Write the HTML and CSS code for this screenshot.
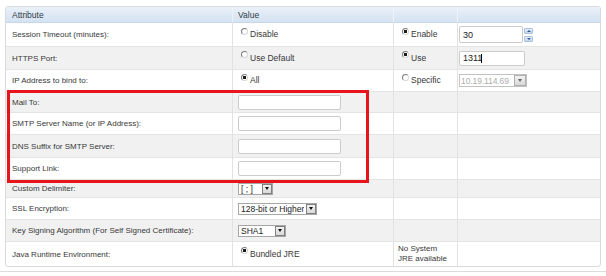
FILE: index.html
```html
<!DOCTYPE html>
<html lang="en">
  <head>
    <meta charset="UTF-8" />
    <title>Server Settings</title>
    <link rel="stylesheet" href="styles.css">
  </head>
  <body>
    <div class="page">
      <table class="settings">
        <colgroup>
          <col class="c-attr" />
          <col class="c-val" />
          <col class="c-opt" />
          <col class="c-extra" />
        </colgroup>
        <thead>
          <tr class="row-head">
            <th>Attribute</th>
            <th>Value</th>
            <th></th>
            <th></th>
          </tr>
        </thead>
        <tbody>
          <tr class="h24">
            <td>Session Timeout (minutes):</td>
            <td><label class="radio"><input type="radio" name="timeout" />Disable</label></td>
            <td><label class="radio"><input type="radio" name="timeout" checked />Enable</label></td>
            <td class="extra">
              <span class="spin">
                <input class="field w-spin" type="text" value="30" />
                <span class="spin-btns"><span class="up"></span><span class="down"></span></span>
              </span>
            </td>
          </tr>
          <tr class="alt h23">
            <td>HTTPS Port:</td>
            <td><label class="radio"><input type="radio" name="port" />Use Default</label></td>
            <td><label class="radio"><input type="radio" name="port" checked />Use</label></td>
            <td class="extra">
              <span class="caret-box">
                <input class="field w-port" type="text" value="1311" />
                <span class="caret"></span>
              </span>
            </td>
          </tr>
          <tr class="h22">
            <td>IP Address to bind to:</td>
            <td><label class="radio"><input type="radio" name="ip" checked />All</label></td>
            <td><label class="radio"><input type="radio" name="ip" />Specific</label></td>
            <td class="extra">
              <span class="select w-ip disabled">
                <select disabled><option>10.19.114.69</option></select>
                <span class="arrow"></span>
              </span>
            </td>
          </tr>
          <tr class="alt h21">
            <td>Mail To:</td>
            <td><input class="field w-text" type="text" /></td>
            <td></td>
            <td></td>
          </tr>
          <tr class="h22">
            <td>SMTP Server Name (or IP Address):</td>
            <td><input class="field w-text" type="text" /></td>
            <td></td>
            <td></td>
          </tr>
          <tr class="alt h23">
            <td>DNS Suffix for SMTP Server:</td>
            <td><input class="field w-text" type="text" /></td>
            <td></td>
            <td></td>
          </tr>
          <tr class="h22">
            <td>Support Link:</td>
            <td><input class="field w-text" type="text" /></td>
            <td></td>
            <td></td>
          </tr>
          <tr class="alt h18">
            <td>Custom Delimiter:</td>
            <td>
              <span class="select w-delim">
                <select><option>[ ; ]</option></select>
                <span class="arrow"></span>
              </span>
            </td>
            <td></td>
            <td></td>
          </tr>
          <tr class="h22">
            <td>SSL Encryption:</td>
            <td>
              <span class="select w-ssl">
                <select><option>128-bit or Higher</option></select>
                <span class="arrow"></span>
              </span>
            </td>
            <td></td>
            <td></td>
          </tr>
          <tr class="alt h22">
            <td>Key Signing Algorithm (For Self Signed Certificate):</td>
            <td>
              <span class="select w-sha">
                <select><option>SHA1</option></select>
                <span class="arrow"></span>
              </span>
            </td>
            <td></td>
            <td></td>
          </tr>
          <tr class="h24">
            <td>Java Runtime Environment:</td>
            <td><label class="radio"><input type="radio" name="jre" checked />Bundled JRE</label></td>
            <td class="note">No System<br />JRE available</td>
            <td></td>
          </tr>
        </tbody>
      </table>
      <div class="page-foot"></div>

      <div class="highlight"></div>
    </div>
  </body>
</html>
```

FILE: styles.css
```css
* {
  box-sizing: border-box;
  margin: 0;
  padding: 0;
}

body {
  background: #fff;
  font-family: "Liberation Sans", Arial, sans-serif;
  font-size: 8px;
  color: #383838;
}

.page {
  position: relative;
  width: 606px;
  padding: 6px 0 0 5px;
}

/* table */

.settings {
  width: 596px;
  table-layout: fixed;
  border-collapse: separate;
  border-spacing: 0;
  border: 1px solid #dadada;
  border-radius: 3px;
}

.c-attr {
  width: 226px;
}

.c-val {
  width: 161px;
}

.c-opt {
  width: 64px;
}

.c-extra {
  width: 143px;
}

.settings th,
.settings td {
  text-align: left;
  vertical-align: middle;
  white-space: nowrap;
  padding: 0 0 0 5px;
  border-bottom: 1px solid #e4e4e4;
  border-left: 1px solid #e2e2e2;
}

.settings th:first-child,
.settings td:first-child {
  border-left: none;
  padding-left: 6px;
}

.settings tr:last-child td {
  border-bottom: none;
}

.settings th {
  font-weight: normal;
  font-size: 8.5px;
  color: #2f3a45;
  background: linear-gradient(to bottom, #eaf1f9, #d4e2f2);
  border-bottom: 1px solid #c9d6e6;
  border-left-color: #eef3fa;
}

.settings td.extra {
  padding-left: 1px;
}

.settings td.note {
  padding-left: 4px;
  line-height: 10px;
  white-space: normal;
}

.alt td {
  background: #f1f1f1;
}

.row-head {
  height: 16px;
}

.h24 {
  height: 24px;
}

.h23 {
  height: 23px;
}

.h22 {
  height: 22px;
}

.h21 {
  height: 21px;
}

.h18 {
  height: 18px;
}

/* radios */

.radio {
  display: inline-flex;
  align-items: center;
  margin-left: 3px;
  font-size: 8.5px;
  color: #383838;
}

.radio input {
  appearance: none;
  width: 7px;
  height: 7px;
  margin: 0 2px 0 0;
  border-radius: 50%;
  border: 1px solid;
  border-color: #7a7a7a #d6d6d6 #d6d6d6 #7a7a7a;
  background: #fff;
  position: relative;
  top: -3px;
}

.radio input:checked {
  background: radial-gradient(circle, #1a1a1a 0 1.4px, #fff 2px);
}

/* text fields */

.field {
  height: 15px;
  border: 1px solid #cbcbcb;
  border-radius: 2px;
  background: #fff;
  padding: 0 3px;
  font-family: "Liberation Sans", Arial, sans-serif;
  font-size: 9px;
  color: #222;
  vertical-align: middle;
  outline: none;
}

.w-text {
  width: 103px;
}

.w-spin {
  width: 64px;
  height: 17px;
}

.w-port {
  width: 66px;
}

.spin {
  display: inline-flex;
  align-items: center;
  gap: 1px;
  vertical-align: middle;
}

.spin-btns {
  display: flex;
  flex-direction: column;
  gap: 2px;
}

.spin-btns span {
  width: 9px;
  height: 6px;
  border: 1px solid #a9c1de;
  border-radius: 1px;
  background: linear-gradient(to bottom, #e8f0fa, #c2d5ec);
  display: flex;
  align-items: center;
  justify-content: center;
}

.spin-btns .up::after {
  content: "";
  border-left: 2px solid transparent;
  border-right: 2px solid transparent;
  border-bottom: 2px solid #2d5b98;
}

.spin-btns .down::after {
  content: "";
  border-left: 2px solid transparent;
  border-right: 2px solid transparent;
  border-top: 2px solid #2d5b98;
}

.caret-box {
  position: relative;
  display: inline-block;
  vertical-align: middle;
}

.caret {
  position: absolute;
  left: 22px;
  top: 3px;
  width: 1px;
  height: 9px;
  background: #000;
}

/* selects */

.select {
  display: inline-flex;
  align-items: stretch;
  height: 12px;
  border: 1px solid #a6a6a6;
  background: #fff;
  vertical-align: middle;
}

.select select {
  appearance: none;
  flex: 1;
  min-width: 0;
  border: none;
  background: transparent;
  padding: 0 2px;
  font-family: "Liberation Sans", Arial, sans-serif;
  font-size: 8.5px;
  line-height: 10px;
  color: #222;
  outline: none;
}

.select .arrow {
  width: 10px;
  margin: 0;
  border: 1px solid #808080;
  background: linear-gradient(to bottom, #f2f2f2, #d9d9d9);
  display: flex;
  align-items: center;
  justify-content: center;
}

.select .arrow::after {
  content: "";
  border-left: 2.5px solid transparent;
  border-right: 2.5px solid transparent;
  border-top: 3px solid #111;
}

.w-delim {
  width: 35px;
}

.w-ssl {
  width: 79px;
}

.w-sha {
  width: 48px;
}

.w-ip {
  width: 68px;
}

.select.disabled {
  height: 13px;
  border-color: #c2c2c2;
}

.select.disabled select {
  padding: 0 1px;
  color: #8a8a8a;
  font-size: 8.5px;
  letter-spacing: -0.1px;
}

.select.disabled .arrow {
  width: 12px;
  border-color: #b0b0b0;
}

.select.disabled .arrow::after {
  border-top-color: #666;
}

.page-foot {
  margin: 4px 0 0 -5px;
  width: 606px;
  border-top: 1px solid #dcdcdc;
}

/* annotation box drawn over the mail rows */
.highlight {
  position: absolute;
  left: 7px;
  top: 90px;
  width: 362px;
  height: 93px;
  border: 3px solid #e8141c;
}
```
